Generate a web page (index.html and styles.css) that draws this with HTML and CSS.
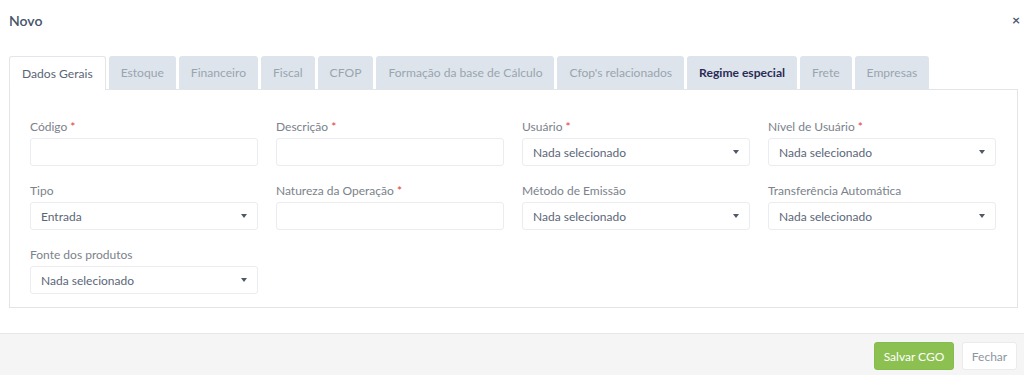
FILE: index.html
```html
<!DOCTYPE html>
<html lang="pt">
<head>
<meta charset="utf-8">
<title>Novo</title>
<link rel="stylesheet" href="styles.css">
</head>
<body>
<div class="modal">
  <div class="modal-header">
    <h4 class="modal-title">Novo</h4>
    <span class="close">×</span>
  </div>
  <div class="modal-body">
    <ul class="tabs">
      <li class="tab active">Dados Gerais</li>
      <li class="tab">Estoque</li>
      <li class="tab">Financeiro</li>
      <li class="tab">Fiscal</li>
      <li class="tab">CFOP</li>
      <li class="tab">Formação da base de Cálculo</li>
      <li class="tab">Cfop's relacionados</li>
      <li class="tab strong">Regime especial</li>
      <li class="tab">Frete</li>
      <li class="tab">Empresas</li>
    </ul>
    <div class="panel">
      <div class="field">
        <label class="label">Código <span class="req">*</span></label>
        <div class="input"></div>
      </div>
      <div class="field">
        <label class="label">Descrição <span class="req">*</span></label>
        <div class="input"></div>
      </div>
      <div class="field">
        <label class="label">Usuário <span class="req">*</span></label>
        <div class="input select"><span>Nada selecionado</span><i class="caret"></i></div>
      </div>
      <div class="field">
        <label class="label">Nível de Usuário <span class="req">*</span></label>
        <div class="input select"><span>Nada selecionado</span><i class="caret"></i></div>
      </div>
      <div class="field">
        <label class="label">Tipo</label>
        <div class="input select"><span>Entrada</span><i class="caret"></i></div>
      </div>
      <div class="field">
        <label class="label">Natureza da Operação <span class="req">*</span></label>
        <div class="input"></div>
      </div>
      <div class="field">
        <label class="label">Método de Emissão</label>
        <div class="input select"><span>Nada selecionado</span><i class="caret"></i></div>
      </div>
      <div class="field">
        <label class="label">Transferência Automática</label>
        <div class="input select"><span>Nada selecionado</span><i class="caret"></i></div>
      </div>
      <div class="field">
        <label class="label">Fonte dos produtos</label>
        <div class="input select"><span>Nada selecionado</span><i class="caret"></i></div>
      </div>
    </div>
  </div>
  <div class="modal-footer">
    <button class="btn btn-success">Salvar CGO</button>
    <button class="btn btn-default">Fechar</button>
  </div>
</div>
</body>
</html>
```

FILE: styles.css
```css
* { box-sizing: border-box; }
html, body { margin: 0; padding: 0; background: #fff; }
body {
  font-family: Lato, "Open Sans", sans-serif;
  font-size: 12px;
  color: #4a5565;
  width: 1024px;
  height: 375px;
  overflow: hidden;
}
.modal { width: 1024px; }
.modal-header {
  height: 40px;
  padding: 0 4px 0 9px;
  display: flex;
  align-items: center;
  justify-content: space-between;
}
.modal-title {
  margin: 0;
  font-size: 14px;
  font-weight: 600;
  color: #46546a;
}
.close {
  font-size: 14px;
  font-weight: 700;
  color: #4b5a72;
  line-height: 1;
}
.modal-body { padding: 16px 6px 0 9px; }
.tabs {
  list-style: none;
  margin: 0;
  padding: 0;
  display: flex;
  gap: 3px;
  align-items: flex-end;
}
.tab {
  height: 33px;
  line-height: 33px;
  padding: 0 12px;
  font-size: 12.1px;
  background: #dde4ec;
  color: #9aa4ae;
  border-radius: 3px 3px 0 0;
  white-space: nowrap;
}
.tab.active {
  height: 34px;
  background: #fff;
  color: #5a6576;
  border: 1px solid #e2e5ea;
  border-bottom: none;
  line-height: 33px;
  padding: 0 12px;
  margin-bottom: -1px;
  position: relative;
  z-index: 1;
}
.tab.strong { font-weight: 700; color: #2b2c55; }
.panel {
  border: 1px solid #e2e4e8;
  padding: 28px 21px 13px 20px;
  display: grid;
  grid-template-columns: repeat(4, 228px);
  column-gap: 18px;
  row-gap: 16px;
}
.field { display: flex; flex-direction: column; }
.label {
  font-size: 12px;
  line-height: 17px;
  height: 17px;
  margin-bottom: 3px;
  color: #7b828b;
}
.req { color: #e53935; }
.input {
  height: 28px;
  border: 1px solid #eaecef;
  border-radius: 3px;
  background: #fff;
}
.select {
  display: flex;
  align-items: center;
  justify-content: space-between;
  padding: 0 10px 0 10px;
  font-size: 12px;
  color: #5b6678;
}
.caret {
  width: 0;
  height: 0;
  border-left: 3.5px solid transparent;
  border-right: 3.5px solid transparent;
  border-top: 4px solid #4f5866;
}
.modal-footer {
  margin-top: 25px;
  border-top: 1px solid #e6e7e9;
  background: #f5f5f5;
  height: 42px;
  padding: 8px 7px 0 0;
  display: flex;
  justify-content: flex-end;
  align-items: flex-start;
  gap: 8px;
}
.btn {
  height: 28px;
  font-family: inherit;
  font-size: 12px;
  border-radius: 3px;
  padding: 0;
  white-space: nowrap;
  cursor: pointer;
}
.btn-success {
  width: 80px;
  background: #8cc152;
  border: 1px solid #86bb4d;
  color: #fff;
}
.btn-default {
  width: 55px;
  background: #fff;
  border: 1px solid #ebebeb;
  color: #8d959f;
}
```
